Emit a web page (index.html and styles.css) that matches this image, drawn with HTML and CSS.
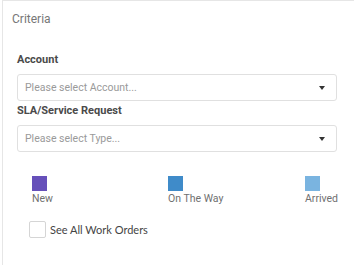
FILE: index.html
```html
<!DOCTYPE html>
<html lang="en">
<head>
    <meta charset="UTF-8">
    <title>Criteria</title>
    <link rel="stylesheet" href="styles.css">
</head>
<body>
    <div class="panel">
        <div class="panel-title">Criteria</div>
        <div class="panel-body">
            <label class="field-label">Account</label>
            <div class="select">
                <span>Please select Account...</span>
                <span class="caret"></span>
            </div>
            <label class="field-label">SLA/Service Request</label>
            <div class="select">
                <span>Please select Type...</span>
                <span class="caret"></span>
            </div>

            <div class="legend">
                <div class="legend-item">
                    <span class="swatch new"></span>
                    <span>New</span>
                </div>
                <div class="legend-item">
                    <span class="swatch way"></span>
                    <span>On The Way</span>
                </div>
                <div class="legend-item">
                    <span class="swatch arrived"></span>
                    <span>Arrived</span>
                </div>
            </div>

            <label class="check">
                <span class="box"></span>
                See All Work Orders
            </label>
        </div>
    </div>
</body>
</html>
```

FILE: styles.css
```css
body {
    margin: 0;
    padding: 0;
    background-color: white;
    font-family: Roboto, "Liberation Sans", sans-serif;
}
.panel {
    margin-left: 2px;
    height: 265px;
    border-top: 1px solid #e6e6e6;
    border-left: 1px solid #e6e6e6;
}
.panel-title {
    padding: 11px 0 0 9px;
    height: 28px;
    font-size: 12px;
    color: #777;
}
.panel-body {
    padding: 13px 17px 0 14px;
}
.field-label {
    display: block;
    font-size: 11px;
    font-weight: bold;
    color: #4a4a4a;
    height: 16px;
}
.select {
    display: flex;
    align-items: center;
    justify-content: space-between;
    height: 25px;
    margin: 5px 0 3px 0;
    padding: 0 11px 0 7px;
    border: 1px solid #e0e0e0;
    border-radius: 3px;
    font-size: 10.5px;
    color: #9a9a9a;
}
.caret {
    width: 0;
    height: 0;
    border-left: 3.5px solid transparent;
    border-right: 3.5px solid transparent;
    border-top: 4px solid #333;
}
.legend {
    display: grid;
    grid-template-columns: 136px 137px auto;
    margin: 24px 0 0 15px;
}
.legend-item {
    display: flex;
    flex-direction: column;
    font-size: 10.5px;
    color: #707070;
}
.swatch {
    width: 15px;
    height: 15px;
    margin-bottom: 1px;
}
.swatch.new {
    background-color: #6650ba;
}
.swatch.way {
    background-color: #3f8bc9;
}
.swatch.arrived {
    background-color: #7ab4e0;
}
.check {
    display: flex;
    align-items: center;
    margin: 16px 0 0 12px;
    font-family: Lato, sans-serif;
    font-size: 11px;
    color: #444;
}
.box {
    width: 15px;
    height: 15px;
    margin-right: 4px;
    border: 1px solid #d5d5d5;
    border-radius: 2px;
}
```
